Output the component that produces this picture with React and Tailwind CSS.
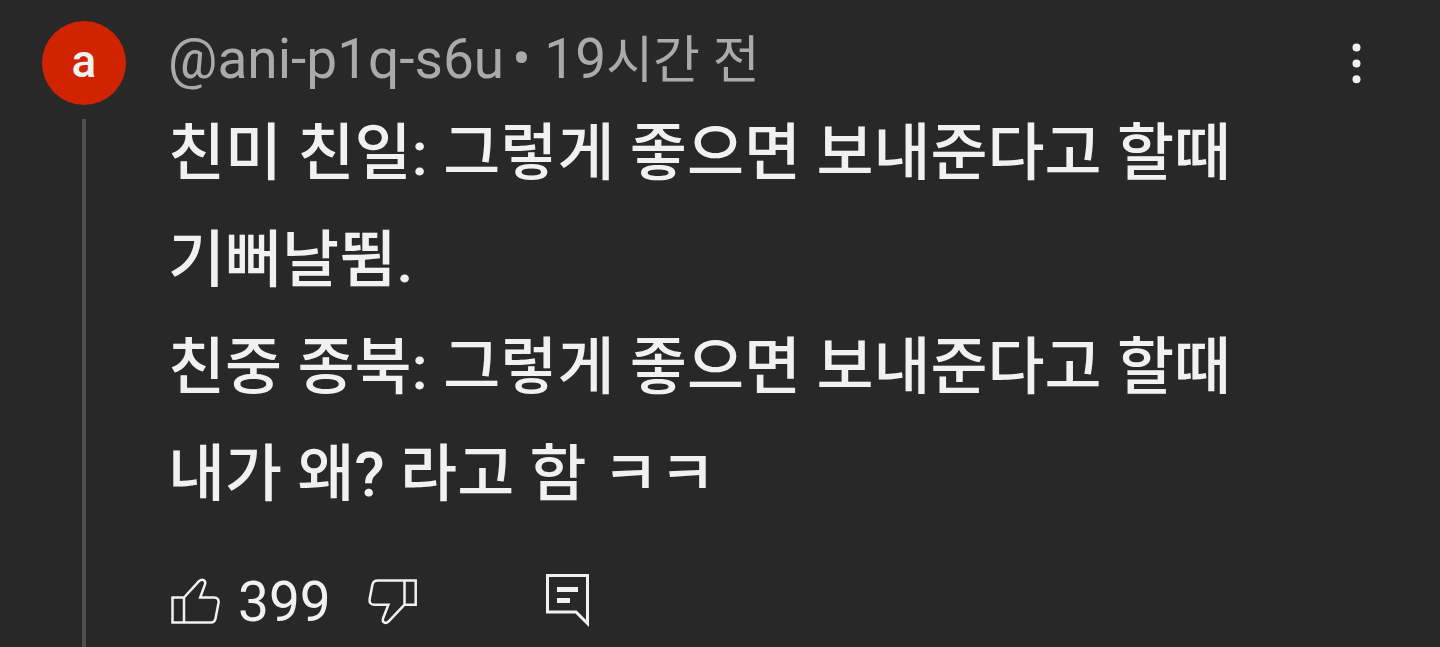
import React from 'react';

const lines = [
  '친미 친일: 그렇게 좋으면 보내준다고 할때',
  '기뻐날뜀.',
  '친중 종북: 그렇게 좋으면 보내준다고 할때',
  '내가 왜? 라고 함 ㅋㅋ',
];

export default function App() {
  return (
    <article className="flex min-h-screen items-stretch bg-[#282828] pl-[42px] pr-[60px] font-[Roboto,'Noto_Sans_CJK_KR',sans-serif] text-[#f1f1f1]">
      {/* Avatar and thread line */}
      <div className="flex w-[84px] shrink-0 flex-col items-center pt-[21px]">
        <div className="flex size-[84px] items-center justify-center rounded-full bg-[#d22300] pb-1 text-[46px] leading-none font-medium">
          a
        </div>
        <div className="mt-[14px] w-1 flex-1 bg-[#4f4f4f]" />
      </div>

      <div className="ml-[42px] min-w-0 flex-1">
        <header className="flex items-baseline pt-[27px] text-[55px] leading-[64px] text-[#aaaaaa]">
          <a href="#channel">@ani-p1q-s6u</a>
          <span className="ml-2">• 19</span>
          <span className="text-[51px]">시간 전</span>
        </header>

        <div className="mt-[7px] text-[62px] leading-[107px] font-medium">
          {lines.map((line) => (
            <p key={line}>{line}</p>
          ))}
        </div>

        {/* Actions */}
        <div className="mt-[42px] flex items-center">
          <button type="button" aria-label="좋아요 399" className="flex items-center gap-[18px] text-[55px] leading-[64px]">
            <svg viewBox="0 0 52 50" className="h-[50px] w-[52px]" fill="none" stroke="currentColor" strokeWidth="2.5">
              <path d="M4.5 20.5H16v25H4.5zM16 20.5 31 4.2c3.2-3 7.2-.8 6 3.2l-4.8 13.1H46c3.5 0 5 2.3 4.5 5.5l-3 15.5c-.6 2.8-2 4-4.5 4H16" />
            </svg>
            399
          </button>
          <button type="button" aria-label="싫어요" className="ml-[35px]">
            <svg viewBox="0 0 52 50" className="h-[50px] w-[52px]" fill="none" stroke="currentColor" strokeWidth="2.5">
              <path d="M38.5 3.5h11.2v24.2H38.5zM38.5 3.5H12c-3.5 0-5 1.3-5.6 4.2l-2.7 14c-.7 3.8.8 6 4.5 6h14.2l-5.3 13.6c-1.4 4 2.4 6 5.4 3.2l16-16.8" />
            </svg>
          </button>
          <button type="button" aria-label="답글" className="ml-[125px]">
            <svg viewBox="0 0 48 58" className="h-[58px] w-12" fill="none" stroke="currentColor">
              <path d="M4.5 2.5h40v48L33 39H4.5z" strokeWidth="3" />
              <path d="M14 16.5h21M14 27.5h13" strokeWidth="5" />
            </svg>
          </button>
        </div>
      </div>

      <button type="button" aria-label="더보기" className="mt-[42px] self-start">
        <svg viewBox="0 0 48 42" className="h-[42px] w-12" fill="currentColor">
          <circle cx="24.5" cy="5.5" r="4" />
          <circle cx="24.5" cy="21.5" r="4" />
          <circle cx="24.5" cy="37.3" r="4" />
        </svg>
      </button>
    </article>
  );
}
